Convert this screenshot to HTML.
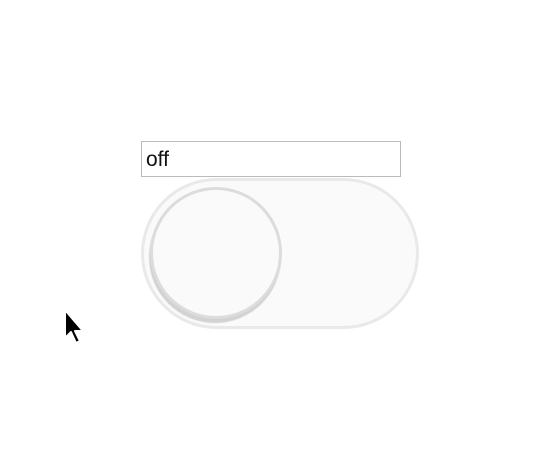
<!DOCTYPE html>
<html><head><style>
body{margin:0;width:552px;height:458px;background:#fff;position:relative;overflow:hidden;font-family:"Liberation Sans",sans-serif}
.inp{position:absolute;left:141px;top:141px;width:258px;height:34px;border:1px solid #bbb;box-sizing:content-box}
.inp span{position:absolute;left:4px;top:6px;font-size:21px;color:#111}
.pill{position:absolute;left:141px;top:178px;width:272px;height:145px;border:3px solid #e9e9e9;border-radius:76px;background:#fafafa}
.knob{position:absolute;left:150px;top:187px;width:126px;height:126px;border:3px solid #dcdcdc;border-radius:50%;background:#fafafa;box-shadow:-1px 4px 1px #d2d2d2}
</style></head><body>
<div class="inp"><span>off</span></div>
<div class="pill"></div>
<div class="knob"></div>
<svg style="position:absolute;left:60px;top:306px" width="30" height="42" viewBox="0 0 30 42">
<path d="M5 4 L5 32 L11 26 L16 37 L20 35 L15 25 L23 25 Z" fill="#000" stroke="#fff" stroke-width="2" stroke-linejoin="round"/>
</svg>
</body></html>
